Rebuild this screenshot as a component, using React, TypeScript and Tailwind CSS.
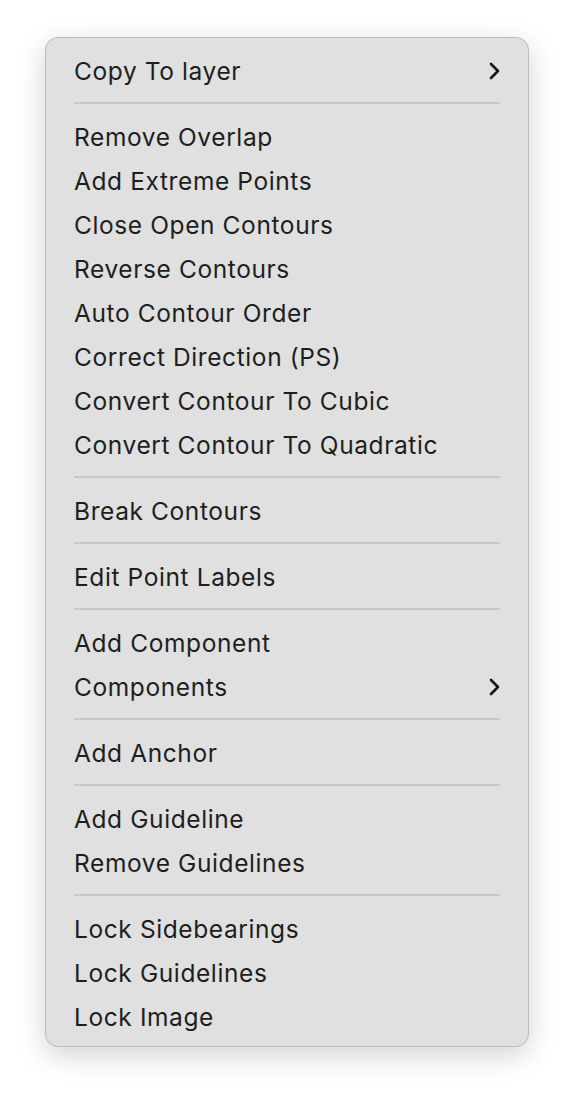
import React from 'react';

type Entry = { label: string; sub?: boolean } | 'sep';

const entries: Entry[] = [
  { label: 'Copy To layer', sub: true },
  'sep',
  { label: 'Remove Overlap' },
  { label: 'Add Extreme Points' },
  { label: 'Close Open Contours' },
  { label: 'Reverse Contours' },
  { label: 'Auto Contour Order' },
  { label: 'Correct Direction (PS)' },
  { label: 'Convert Contour To Cubic' },
  { label: 'Convert Contour To Quadratic' },
  'sep',
  { label: 'Break Contours' },
  'sep',
  { label: 'Edit Point Labels' },
  'sep',
  { label: 'Add Component' },
  { label: 'Components', sub: true },
  'sep',
  { label: 'Add Anchor' },
  'sep',
  { label: 'Add Guideline' },
  { label: 'Remove Guidelines' },
  'sep',
  { label: 'Lock Sidebearings' },
  { label: 'Lock Guidelines' },
  { label: 'Lock Image' },
];

function Chevron() {
  return (
    <svg width="14" height="18" viewBox="0 0 14 18">
      <polyline points="4,2 11,9 4,16" fill="none" stroke="#111" strokeWidth="2.6" strokeLinecap="round" strokeLinejoin="round" />
    </svg>
  );
}

export default function App() {
  return (
    <div className="min-h-screen bg-white pt-[37px] pl-[45px]" style={{ fontFamily: 'Inter, "Noto Sans", sans-serif' }}>
      <div className="w-[484px] rounded-[13px] border border-[#bdbdbd] bg-[#dfe0df] pt-[11px] pb-[7px] shadow-[0_8px_28px_rgba(0,0,0,0.18)]">
        {entries.map((e, i) =>
          e === 'sep' ? (
            <div key={i} className="flex h-[22px] -translate-y-[1px] items-center px-[28px]">
              <div className="h-[2px] w-full bg-[#c6c7c6]" />
            </div>
          ) : (
            <div key={i} className="flex h-[44px] items-center justify-between pl-[28px] pr-[27px] text-[24.5px] tracking-[0.6px] text-[#1e1e1e]">
              <span>{e.label}</span>
              {e.sub && <Chevron />}
            </div>
          )
        )}
      </div>
    </div>
  );
}
